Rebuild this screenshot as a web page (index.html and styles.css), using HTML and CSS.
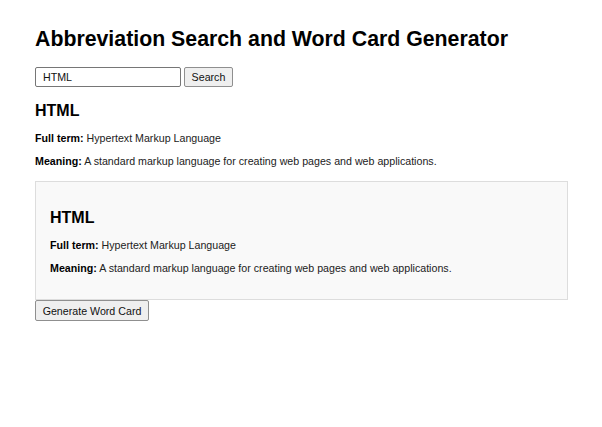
FILE: index.html
```html
<!DOCTYPE html>
<html lang="en">
<head>
<meta charset="utf-8">
<title>Abbreviation Search and Word Card Generator</title>
<link rel="stylesheet" href="styles.css">
</head>
<body>
<div class="page">
  <h1 class="title">Abbreviation Search and Word Card Generator</h1>
  <div class="search">
    <input class="search-input" type="text" value="HTML">
    <button class="btn search-btn" type="button">Search</button>
  </div>
  <div class="result">
    <h2 class="abbr">HTML</h2>
    <p class="line first"><strong>Full term:</strong> Hypertext Markup Language</p>
    <p class="line"><strong>Meaning:</strong> A standard markup language for creating web pages and web applications.</p>
  </div>
  <div class="card">
    <h2 class="abbr card-abbr">HTML</h2>
    <p class="line first"><strong>Full term:</strong> Hypertext Markup Language</p>
    <p class="line last"><strong>Meaning:</strong> A standard markup language for creating web pages and web applications.</p>
  </div>
  <button class="btn gen-btn" type="button">Generate Word Card</button>
</div>
</body>
</html>
```

FILE: styles.css
```css
html, body {
  margin: 0;
  padding: 0;
  background: #ffffff;
}
body {
  font-family: "Liberation Sans", Arial, sans-serif;
  color: #000;
}
.page {
  padding: 27px 34px 0 35px;
}
.title {
  margin: 0 0 15px;
  font-size: 21.3px;
  line-height: 25px;
  font-weight: bold;
}
.search {
  display: flex;
  gap: 3px;
  height: 20px;
  margin-bottom: 15px;
}
.search-input {
  box-sizing: border-box;
  width: 146px;
  height: 20px;
  margin: 0;
  padding: 0 7px;
  font-family: "Liberation Sans", Arial, sans-serif;
  font-size: 10.67px;
  color: #111;
  border: 1px solid #767676;
  border-radius: 2px;
  background: #fff;
}
.btn {
  box-sizing: border-box;
  height: 20px;
  margin: 0;
  padding: 0 6px;
  font-family: "Liberation Sans", Arial, sans-serif;
  font-size: 10.67px;
  color: #111;
  background: #efefef;
  border: 1px solid #8f8f8f;
  border-radius: 2px;
}
.search-btn {
  width: 49px;
}
.abbr {
  margin: 0;
  font-size: 16px;
  line-height: 18px;
  font-weight: bold;
}
.line {
  margin: 9px 0 0;
  font-size: 10.67px;
  line-height: 14px;
  color: #222;
}
.line strong {
  color: #000;
}
.line.first {
  margin-top: 11px;
}
.card {
  margin-top: 13px;
  padding: 14px;
  border: 1px solid #dddddd;
  background: #f9f9f9;
}
.card-abbr {
  margin-top: 13px;
}
.line.last {
  margin-bottom: 10px;
}
.gen-btn {
  display: block;
  width: 114px;
  height: 21px;
}
```
